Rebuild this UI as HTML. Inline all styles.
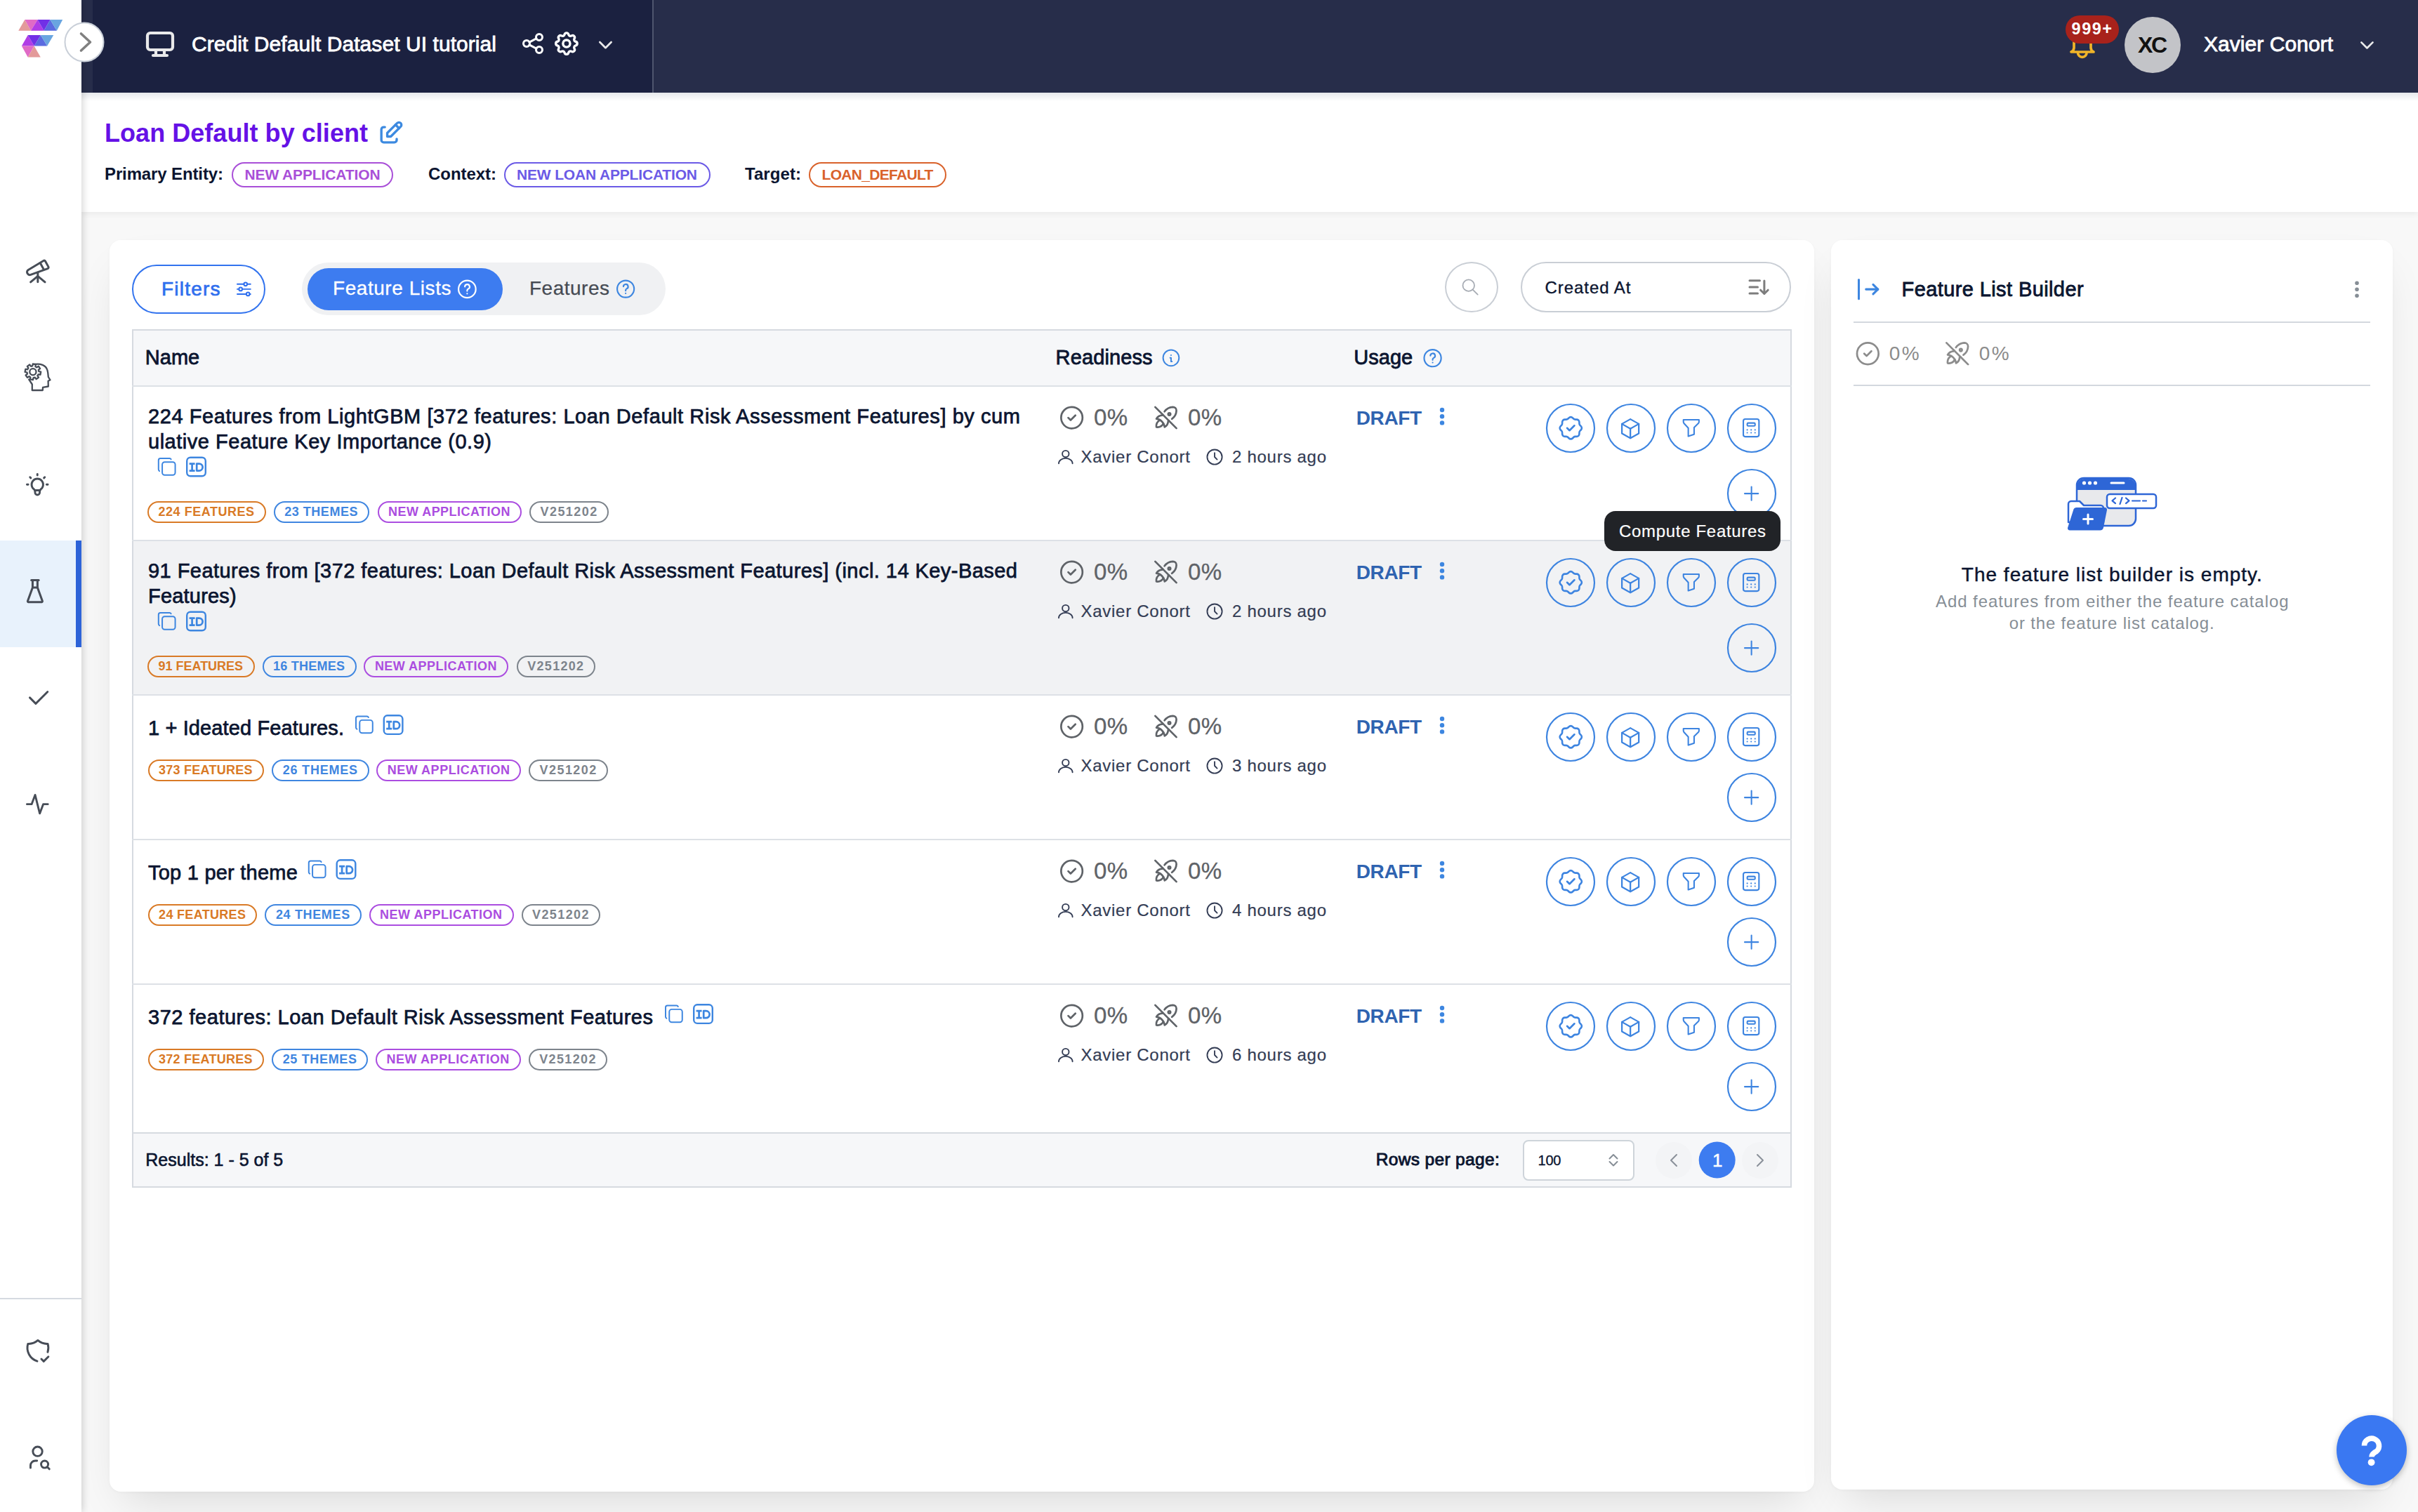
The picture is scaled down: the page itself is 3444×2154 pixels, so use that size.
<!DOCTYPE html>
<html><head><meta charset="utf-8"><title>Feature Lists</title>
<style>
html,body{margin:0;padding:0;}
body{width:3444px;height:2154px;position:relative;overflow:hidden;background:#f8f8f8;font-family:"Liberation Sans",sans-serif;}
.t{position:absolute;white-space:nowrap;}
</style></head><body>
<div style="position:absolute;left:156px;top:342px;width:2428px;height:1783px;background:#fff;border-radius:16px;box-shadow:0 30px 60px -20px rgba(0,0,0,0.13),0 1px 4px rgba(0,0,0,0.03);"></div>
<div style="position:absolute;left:2608px;top:342px;width:800px;height:1780px;background:#fff;border-radius:16px;box-shadow:0 30px 60px -20px rgba(0,0,0,0.13),0 1px 4px rgba(0,0,0,0.03);"></div>
<div style="position:absolute;left:116px;top:132px;width:3328px;height:170px;background:#fff;box-shadow:0 3px 8px rgba(0,0,0,0.06);"></div>
<div style="position:absolute;left:116px;top:132px;width:3328px;height:12px;background:linear-gradient(#e6e8ec,rgba(255,255,255,0));"></div>
<div style="position:absolute;left:116px;top:0px;width:3328px;height:132px;background:#272d4a;"></div>
<div style="position:absolute;left:132px;top:0px;width:797px;height:132px;background:#1b2140;"></div>
<div style="position:absolute;left:929px;top:0px;width:2px;height:132px;background:#4f566e;"></div>
<div style="position:absolute;left:0px;top:0px;width:116px;height:2154px;background:#fff;box-shadow:2px 0 10px rgba(0,0,0,0.17);z-index:2;"></div>
<div style="position:absolute;left:0px;top:770px;width:108px;height:152px;background:#e8f2fc;z-index:2;"></div>
<div style="position:absolute;left:108px;top:770px;width:8px;height:152px;background:#2d63d8;z-index:2;"></div>
<div style="position:absolute;left:0px;top:1849px;width:116px;height:2px;background:#d5dae1;z-index:2;"></div>
<div class="t" style="left:273.00px;top:47.81px;font-size:30px;line-height:30px;font-weight:400;color:#fff;letter-spacing:0.065px;-webkit-text-stroke:0.8px #fff;">Credit Default Dataset UI tutorial</div>
<div style="position:absolute;left:2942px;top:22px;width:76px;height:40px;background:#a8221b;border-radius:20px;z-index:6;"></div>
<div class="t" style="left:2950.60px;top:30.11px;font-size:23.5px;line-height:23.5px;font-weight:700;color:#fff;letter-spacing:1.487px;z-index:7;">999+</div>
<div style="position:absolute;left:3026px;top:24px;width:80px;height:80px;background:#c3c4c8;border-radius:50%;"></div>
<div class="t" style="left:3045.00px;top:47.81px;font-size:32px;line-height:32px;font-weight:700;color:#111;letter-spacing:-2.453px;">XC</div>
<div class="t" style="left:3139.00px;top:47.61px;font-size:30px;line-height:30px;font-weight:400;color:#fff;letter-spacing:0.048px;-webkit-text-stroke:0.8px #fff;">Xavier Conort</div>
<div class="t" style="left:149.00px;top:171.53px;font-size:36px;line-height:36px;font-weight:700;color:#6511e6;letter-spacing:0.045px;">Loan Default by client</div>
<div class="t" style="left:149.00px;top:236.28px;font-size:24px;line-height:24px;font-weight:700;color:#0b1530;letter-spacing:-0.123px;">Primary Entity:</div>
<div style="position:absolute;left:330px;top:231px;width:230px;height:35.5px;border:2px solid #a94fd8;border-radius:18px;box-sizing:border-box;"></div>
<div class="t" style="left:348.50px;top:238.02px;font-size:21px;line-height:21px;font-weight:700;color:#a94fd8;letter-spacing:-0.123px;">NEW APPLICATION</div>
<div class="t" style="left:610.00px;top:236.28px;font-size:24px;line-height:24px;font-weight:700;color:#0b1530;letter-spacing:-0.047px;">Context:</div>
<div style="position:absolute;left:718px;top:231px;width:294px;height:35.5px;border:2px solid #6b5ae6;border-radius:18px;box-sizing:border-box;"></div>
<div class="t" style="left:736.00px;top:238.02px;font-size:21px;line-height:21px;font-weight:700;color:#6b5ae6;letter-spacing:-0.166px;">NEW LOAN APPLICATION</div>
<div class="t" style="left:1061.00px;top:236.28px;font-size:24px;line-height:24px;font-weight:700;color:#0b1530;letter-spacing:0.073px;">Target:</div>
<div style="position:absolute;left:1152px;top:231px;width:196px;height:35.5px;border:2px solid #d9622b;border-radius:18px;box-sizing:border-box;"></div>
<div class="t" style="left:1170.60px;top:238.02px;font-size:21px;line-height:21px;font-weight:700;color:#d9622b;letter-spacing:-0.696px;">LOAN_DEFAULT</div>
<div style="position:absolute;left:188.4px;top:377px;width:190px;height:69.5px;border:2.5px solid #3273ee;border-radius:35px;box-sizing:border-box;"></div>
<div class="t" style="left:230.00px;top:398.10px;font-size:28px;line-height:28px;font-weight:400;color:#2f6fee;letter-spacing:1.211px;-webkit-text-stroke:0.7px #2f6fee;">Filters</div>
<div style="position:absolute;left:429.7px;top:374px;width:518.3px;height:75px;background:#f0f1f3;border-radius:38px;"></div>
<div style="position:absolute;left:437.7px;top:382px;width:278px;height:60px;background:#3d7cf0;border-radius:30px;"></div>
<div class="t" style="left:474.00px;top:397.30px;font-size:28px;line-height:28px;font-weight:400;color:#fff;letter-spacing:0.553px;-webkit-text-stroke:0.3px #fff;">Feature Lists</div>
<div class="t" style="left:754.00px;top:397.30px;font-size:28px;line-height:28px;font-weight:400;color:#464b53;letter-spacing:0.500px;-webkit-text-stroke:0.25px #464b53;">Features</div>
<div style="position:absolute;left:2058px;top:373px;width:76px;height:72px;border:2px solid #c9ced5;border-radius:50%;box-sizing:border-box;background:#fff;"></div>
<div style="position:absolute;left:2166px;top:373px;width:385px;height:72px;border:2px solid #c9ced5;border-radius:36px;box-sizing:border-box;background:#fff;"></div>
<div class="t" style="left:2200.50px;top:397.68px;font-size:24px;line-height:24px;font-weight:400;color:#0b1530;letter-spacing:0.955px;-webkit-text-stroke:0.35px #0b1530;">Created At</div>
<div style="position:absolute;left:188px;top:469px;width:2364px;height:1223px;border:2px solid #d6dae0;box-sizing:border-box;"></div>
<div style="position:absolute;left:190px;top:471px;width:2360px;height:79px;background:#f6f7f9;"></div>
<div class="t" style="left:206.80px;top:495.45px;font-size:29px;line-height:29px;font-weight:400;color:#0b1530;letter-spacing:0.014px;-webkit-text-stroke:0.8px #0b1530;">Name</div>
<div class="t" style="left:1503.60px;top:495.45px;font-size:29px;line-height:29px;font-weight:400;color:#0b1530;letter-spacing:0.121px;-webkit-text-stroke:0.8px #0b1530;">Readiness</div>
<div class="t" style="left:1928.20px;top:495.45px;font-size:29px;line-height:29px;font-weight:400;color:#0b1530;letter-spacing:0.043px;-webkit-text-stroke:0.8px #0b1530;">Usage</div>
<div style="position:absolute;left:190px;top:770px;width:2360px;height:220px;background:#f1f2f4;"></div>
<div style="position:absolute;left:188px;top:549px;width:2364px;height:2px;background:#dde1e6;"></div>
<div style="position:absolute;left:188px;top:769px;width:2364px;height:2px;background:#dde1e6;"></div>
<div style="position:absolute;left:188px;top:989px;width:2364px;height:2px;background:#dde1e6;"></div>
<div style="position:absolute;left:188px;top:1195px;width:2364px;height:2px;background:#dde1e6;"></div>
<div style="position:absolute;left:188px;top:1401px;width:2364px;height:2px;background:#dde1e6;"></div>
<div style="position:absolute;left:188px;top:1613px;width:2364px;height:2px;background:#dde1e6;"></div>
<div style="position:absolute;left:190px;top:1615px;width:2360px;height:75px;background:#f6f7f9;"></div>
<div style="position:absolute;left:188px;top:1613px;width:2364px;height:2px;background:#d6dae0;"></div>
<div class="t" style="left:211.00px;top:578.75px;font-size:29px;line-height:29px;font-weight:400;color:#0b1530;letter-spacing:0.572px;-webkit-text-stroke:0.75px #0b1530;">224 Features from LightGBM [372 features: Loan Default Risk Assessment Features] by cum</div>
<div class="t" style="left:211.00px;top:614.95px;font-size:29px;line-height:29px;font-weight:400;color:#0b1530;letter-spacing:0.524px;-webkit-text-stroke:0.75px #0b1530;">ulative Feature Key Importance (0.9)</div>
<div style="position:absolute;left:210px;top:714px;width:168.5px;height:30.5px;border:2px solid #d97a26;border-radius:16px;box-sizing:border-box;"></div>
<div class="t" style="left:225.50px;top:720.46px;font-size:18px;line-height:18px;font-weight:700;color:#d97a26;letter-spacing:0.527px;">224 FEATURES</div>
<div style="position:absolute;left:389.7px;top:714px;width:136.3px;height:30.5px;border:2px solid #3f86e0;border-radius:16px;box-sizing:border-box;"></div>
<div class="t" style="left:405.20px;top:720.46px;font-size:18px;line-height:18px;font-weight:700;color:#3f86e0;letter-spacing:0.534px;">23 THEMES</div>
<div style="position:absolute;left:537.5px;top:714px;width:205.5px;height:30.5px;border:2px solid #ab4de0;border-radius:16px;box-sizing:border-box;"></div>
<div class="t" style="left:553.00px;top:720.46px;font-size:18px;line-height:18px;font-weight:700;color:#ab4de0;letter-spacing:0.464px;">NEW APPLICATION</div>
<div style="position:absolute;left:754px;top:714px;width:112.70000000000005px;height:30.5px;border:2px solid #7d848c;border-radius:16px;box-sizing:border-box;"></div>
<div class="t" style="left:769.50px;top:720.46px;font-size:18px;line-height:18px;font-weight:700;color:#7d848c;letter-spacing:1.437px;">V251202</div>
<div class="t" style="left:1558.00px;top:578.07px;font-size:33px;line-height:33px;font-weight:400;color:#5f6368;letter-spacing:0.297px;-webkit-text-stroke:0.3px #5f6368;">0%</div>
<div class="t" style="left:1692.00px;top:578.07px;font-size:33px;line-height:33px;font-weight:400;color:#5f6368;letter-spacing:0.297px;-webkit-text-stroke:0.3px #5f6368;">0%</div>
<div class="t" style="left:1539.50px;top:638.68px;font-size:24px;line-height:24px;font-weight:400;color:#343d55;letter-spacing:0.730px;-webkit-text-stroke:0.2px #343d55;">Xavier Conort</div>
<div class="t" style="left:1755.00px;top:638.68px;font-size:24px;line-height:24px;font-weight:400;color:#343d55;letter-spacing:0.723px;-webkit-text-stroke:0.2px #343d55;">2 hours ago</div>
<div class="t" style="left:1931.80px;top:582.30px;font-size:28px;line-height:28px;font-weight:700;color:#2f63b0;letter-spacing:-0.419px;">DRAFT</div>
<div class="t" style="left:211.00px;top:798.75px;font-size:29px;line-height:29px;font-weight:400;color:#0b1530;letter-spacing:0.453px;-webkit-text-stroke:0.75px #0b1530;">91 Features from [372 features: Loan Default Risk Assessment Features] (incl. 14 Key-Based</div>
<div class="t" style="left:211.00px;top:834.95px;font-size:29px;line-height:29px;font-weight:400;color:#0b1530;letter-spacing:0.199px;-webkit-text-stroke:0.75px #0b1530;">Features)</div>
<div style="position:absolute;left:210px;top:934px;width:152.60000000000002px;height:30.5px;border:2px solid #d97a26;border-radius:16px;box-sizing:border-box;"></div>
<div class="t" style="left:225.50px;top:940.46px;font-size:18px;line-height:18px;font-weight:700;color:#d97a26;letter-spacing:-0.010px;">91 FEATURES</div>
<div style="position:absolute;left:373.5px;top:934px;width:134.0px;height:30.5px;border:2px solid #3f86e0;border-radius:16px;box-sizing:border-box;"></div>
<div class="t" style="left:389.00px;top:940.46px;font-size:18px;line-height:18px;font-weight:700;color:#3f86e0;letter-spacing:0.246px;">16 THEMES</div>
<div style="position:absolute;left:518.4px;top:934px;width:205.60000000000002px;height:30.5px;border:2px solid #ab4de0;border-radius:16px;box-sizing:border-box;"></div>
<div class="t" style="left:533.90px;top:940.46px;font-size:18px;line-height:18px;font-weight:700;color:#ab4de0;letter-spacing:0.471px;">NEW APPLICATION</div>
<div style="position:absolute;left:735.7px;top:934px;width:111.89999999999998px;height:30.5px;border:2px solid #7d848c;border-radius:16px;box-sizing:border-box;"></div>
<div class="t" style="left:751.20px;top:940.46px;font-size:18px;line-height:18px;font-weight:700;color:#7d848c;letter-spacing:1.304px;">V251202</div>
<div class="t" style="left:1558.00px;top:798.07px;font-size:33px;line-height:33px;font-weight:400;color:#5f6368;letter-spacing:0.297px;-webkit-text-stroke:0.3px #5f6368;">0%</div>
<div class="t" style="left:1692.00px;top:798.07px;font-size:33px;line-height:33px;font-weight:400;color:#5f6368;letter-spacing:0.297px;-webkit-text-stroke:0.3px #5f6368;">0%</div>
<div class="t" style="left:1539.50px;top:858.68px;font-size:24px;line-height:24px;font-weight:400;color:#343d55;letter-spacing:0.730px;-webkit-text-stroke:0.2px #343d55;">Xavier Conort</div>
<div class="t" style="left:1755.00px;top:858.68px;font-size:24px;line-height:24px;font-weight:400;color:#343d55;letter-spacing:0.723px;-webkit-text-stroke:0.2px #343d55;">2 hours ago</div>
<div class="t" style="left:1931.80px;top:802.30px;font-size:28px;line-height:28px;font-weight:700;color:#2f63b0;letter-spacing:-0.419px;">DRAFT</div>
<div class="t" style="left:211.00px;top:1023.45px;font-size:29px;line-height:29px;font-weight:400;color:#0b1530;letter-spacing:0.125px;-webkit-text-stroke:0.75px #0b1530;">1 + Ideated Features.</div>
<div style="position:absolute;left:210.6px;top:1082px;width:165.29999999999998px;height:30.5px;border:2px solid #d97a26;border-radius:16px;box-sizing:border-box;"></div>
<div class="t" style="left:226.10px;top:1088.46px;font-size:18px;line-height:18px;font-weight:700;color:#d97a26;letter-spacing:0.236px;">373 FEATURES</div>
<div style="position:absolute;left:387.2px;top:1082px;width:138.40000000000003px;height:30.5px;border:2px solid #3f86e0;border-radius:16px;box-sizing:border-box;"></div>
<div class="t" style="left:402.70px;top:1088.46px;font-size:18px;line-height:18px;font-weight:700;color:#3f86e0;letter-spacing:0.796px;">26 THEMES</div>
<div style="position:absolute;left:536.2px;top:1082px;width:206.29999999999995px;height:30.5px;border:2px solid #ab4de0;border-radius:16px;box-sizing:border-box;"></div>
<div class="t" style="left:551.70px;top:1088.46px;font-size:18px;line-height:18px;font-weight:700;color:#ab4de0;letter-spacing:0.521px;">NEW APPLICATION</div>
<div style="position:absolute;left:753px;top:1082px;width:112.79999999999995px;height:30.5px;border:2px solid #7d848c;border-radius:16px;box-sizing:border-box;"></div>
<div class="t" style="left:768.50px;top:1088.46px;font-size:18px;line-height:18px;font-weight:700;color:#7d848c;letter-spacing:1.454px;">V251202</div>
<div class="t" style="left:1558.00px;top:1018.07px;font-size:33px;line-height:33px;font-weight:400;color:#5f6368;letter-spacing:0.297px;-webkit-text-stroke:0.3px #5f6368;">0%</div>
<div class="t" style="left:1692.00px;top:1018.07px;font-size:33px;line-height:33px;font-weight:400;color:#5f6368;letter-spacing:0.297px;-webkit-text-stroke:0.3px #5f6368;">0%</div>
<div class="t" style="left:1539.50px;top:1078.68px;font-size:24px;line-height:24px;font-weight:400;color:#343d55;letter-spacing:0.730px;-webkit-text-stroke:0.2px #343d55;">Xavier Conort</div>
<div class="t" style="left:1755.00px;top:1078.68px;font-size:24px;line-height:24px;font-weight:400;color:#343d55;letter-spacing:0.723px;-webkit-text-stroke:0.2px #343d55;">3 hours ago</div>
<div class="t" style="left:1931.80px;top:1022.30px;font-size:28px;line-height:28px;font-weight:700;color:#2f63b0;letter-spacing:-0.419px;">DRAFT</div>
<div class="t" style="left:211.00px;top:1229.45px;font-size:29px;line-height:29px;font-weight:400;color:#0b1530;letter-spacing:0.230px;-webkit-text-stroke:0.75px #0b1530;">Top 1 per theme</div>
<div style="position:absolute;left:210.6px;top:1288px;width:155.79999999999998px;height:30.5px;border:2px solid #d97a26;border-radius:16px;box-sizing:border-box;"></div>
<div class="t" style="left:226.10px;top:1294.46px;font-size:18px;line-height:18px;font-weight:700;color:#d97a26;letter-spacing:0.310px;">24 FEATURES</div>
<div style="position:absolute;left:377.4px;top:1288px;width:137.30000000000007px;height:30.5px;border:2px solid #3f86e0;border-radius:16px;box-sizing:border-box;"></div>
<div class="t" style="left:392.90px;top:1294.46px;font-size:18px;line-height:18px;font-weight:700;color:#3f86e0;letter-spacing:0.659px;">24 THEMES</div>
<div style="position:absolute;left:525.6px;top:1288px;width:206.0px;height:30.5px;border:2px solid #ab4de0;border-radius:16px;box-sizing:border-box;"></div>
<div class="t" style="left:541.10px;top:1294.46px;font-size:18px;line-height:18px;font-weight:700;color:#ab4de0;letter-spacing:0.500px;">NEW APPLICATION</div>
<div style="position:absolute;left:742.5px;top:1288px;width:112.5px;height:30.5px;border:2px solid #7d848c;border-radius:16px;box-sizing:border-box;"></div>
<div class="t" style="left:758.00px;top:1294.46px;font-size:18px;line-height:18px;font-weight:700;color:#7d848c;letter-spacing:1.404px;">V251202</div>
<div class="t" style="left:1558.00px;top:1224.07px;font-size:33px;line-height:33px;font-weight:400;color:#5f6368;letter-spacing:0.297px;-webkit-text-stroke:0.3px #5f6368;">0%</div>
<div class="t" style="left:1692.00px;top:1224.07px;font-size:33px;line-height:33px;font-weight:400;color:#5f6368;letter-spacing:0.297px;-webkit-text-stroke:0.3px #5f6368;">0%</div>
<div class="t" style="left:1539.50px;top:1284.68px;font-size:24px;line-height:24px;font-weight:400;color:#343d55;letter-spacing:0.730px;-webkit-text-stroke:0.2px #343d55;">Xavier Conort</div>
<div class="t" style="left:1755.00px;top:1284.68px;font-size:24px;line-height:24px;font-weight:400;color:#343d55;letter-spacing:0.723px;-webkit-text-stroke:0.2px #343d55;">4 hours ago</div>
<div class="t" style="left:1931.80px;top:1228.30px;font-size:28px;line-height:28px;font-weight:700;color:#2f63b0;letter-spacing:-0.419px;">DRAFT</div>
<div class="t" style="left:211.00px;top:1435.45px;font-size:29px;line-height:29px;font-weight:400;color:#0b1530;letter-spacing:0.517px;-webkit-text-stroke:0.75px #0b1530;">372 features: Loan Default Risk Assessment Features</div>
<div style="position:absolute;left:210.6px;top:1494px;width:165.29999999999998px;height:30.5px;border:2px solid #d97a26;border-radius:16px;box-sizing:border-box;"></div>
<div class="t" style="left:226.10px;top:1500.46px;font-size:18px;line-height:18px;font-weight:700;color:#d97a26;letter-spacing:0.236px;">372 FEATURES</div>
<div style="position:absolute;left:387.2px;top:1494px;width:137.3px;height:30.5px;border:2px solid #3f86e0;border-radius:16px;box-sizing:border-box;"></div>
<div class="t" style="left:402.70px;top:1500.46px;font-size:18px;line-height:18px;font-weight:700;color:#3f86e0;letter-spacing:0.659px;">25 THEMES</div>
<div style="position:absolute;left:535px;top:1494px;width:206.79999999999995px;height:30.5px;border:2px solid #ab4de0;border-radius:16px;box-sizing:border-box;"></div>
<div class="t" style="left:550.50px;top:1500.46px;font-size:18px;line-height:18px;font-weight:700;color:#ab4de0;letter-spacing:0.557px;">NEW APPLICATION</div>
<div style="position:absolute;left:752.7px;top:1494px;width:112.29999999999995px;height:30.5px;border:2px solid #7d848c;border-radius:16px;box-sizing:border-box;"></div>
<div class="t" style="left:768.20px;top:1500.46px;font-size:18px;line-height:18px;font-weight:700;color:#7d848c;letter-spacing:1.370px;">V251202</div>
<div class="t" style="left:1558.00px;top:1430.07px;font-size:33px;line-height:33px;font-weight:400;color:#5f6368;letter-spacing:0.297px;-webkit-text-stroke:0.3px #5f6368;">0%</div>
<div class="t" style="left:1692.00px;top:1430.07px;font-size:33px;line-height:33px;font-weight:400;color:#5f6368;letter-spacing:0.297px;-webkit-text-stroke:0.3px #5f6368;">0%</div>
<div class="t" style="left:1539.50px;top:1490.68px;font-size:24px;line-height:24px;font-weight:400;color:#343d55;letter-spacing:0.730px;-webkit-text-stroke:0.2px #343d55;">Xavier Conort</div>
<div class="t" style="left:1755.00px;top:1490.68px;font-size:24px;line-height:24px;font-weight:400;color:#343d55;letter-spacing:0.723px;-webkit-text-stroke:0.2px #343d55;">6 hours ago</div>
<div class="t" style="left:1931.80px;top:1434.30px;font-size:28px;line-height:28px;font-weight:700;color:#2f63b0;letter-spacing:-0.419px;">DRAFT</div>
<div class="t" style="left:207.30px;top:1639.84px;font-size:25px;line-height:25px;font-weight:400;color:#0b1530;letter-spacing:0.003px;-webkit-text-stroke:0.6px #0b1530;">Results: 1 - 5 of 5</div>
<div class="t" style="left:1959.80px;top:1640.26px;font-size:24.5px;line-height:24.5px;font-weight:400;color:#0b1530;letter-spacing:0.338px;-webkit-text-stroke:0.9px #0b1530;">Rows per page:</div>
<div style="position:absolute;left:2168.6px;top:1623.7px;width:159px;height:58.3px;border:2px solid #ced4da;border-radius:8px;box-sizing:border-box;background:#fff;"></div>
<div class="t" style="left:2190.50px;top:1642.77px;font-size:20px;line-height:20px;font-weight:400;color:#0b1530;letter-spacing:-0.188px;-webkit-text-stroke:0.3px #0b1530;">100</div>
<div class="t" style="left:2439.00px;top:1639.99px;font-size:26px;line-height:26px;font-weight:400;color:#fff;letter-spacing:0.000px;-webkit-text-stroke:0.5px #fff;z-index:6;">1</div>
<div style="position:absolute;left:2284.8px;top:728px;width:251.2px;height:57px;background:#212327;border-radius:16px;z-index:10;"></div>
<div class="t" style="left:2306.00px;top:744.68px;font-size:24px;line-height:24px;font-weight:400;color:#fff;letter-spacing:0.682px;-webkit-text-stroke:0.2px #fff;z-index:11;">Compute Features</div>
<div class="t" style="left:2708.60px;top:398.45px;font-size:29px;line-height:29px;font-weight:400;color:#0b1530;letter-spacing:0.396px;-webkit-text-stroke:0.8px #0b1530;">Feature List Builder</div>
<div style="position:absolute;left:2640px;top:457.6px;width:736px;height:2px;background:#d3d8de;"></div>
<div style="position:absolute;left:2640px;top:547.7px;width:736px;height:2px;background:#d3d8de;"></div>
<div class="t" style="left:2690.80px;top:490.30px;font-size:28px;line-height:28px;font-weight:400;color:#8c8c8c;letter-spacing:2.331px;">0%</div>
<div class="t" style="left:2818.70px;top:490.30px;font-size:28px;line-height:28px;font-weight:400;color:#8c8c8c;letter-spacing:2.431px;">0%</div>
<div class="t" style="left:2793.80px;top:805.30px;font-size:28px;line-height:28px;font-weight:400;color:#0b1530;letter-spacing:1.007px;-webkit-text-stroke:0.45px #0b1530;">The feature list builder is empty.</div>
<div class="t" style="left:2757.00px;top:844.68px;font-size:24px;line-height:24px;font-weight:400;color:#868e96;letter-spacing:0.920px;">Add features from either the feature catalog</div>
<div class="t" style="left:2861.80px;top:875.68px;font-size:24px;line-height:24px;font-weight:400;color:#868e96;letter-spacing:0.827px;">or the feature list catalog.</div>
<div style="position:absolute;left:3328px;top:2016px;width:100px;height:100px;background:#3a78f2;border-radius:50%;box-shadow:0 3px 8px rgba(0,0,0,0.25);z-index:10;"></div>
<svg style="position:absolute;left:0;top:0;z-index:5;pointer-events:none" width="3444" height="2154" viewBox="0 0 3444 2154">
<g><polygon points="26.25,43.8 35.3,28.1 44,43.8" fill="#e39a9a"/><polygon points="35.3,28.1 53.5,28.1 44,43.8" fill="#e06ac6"/><polygon points="44,43.8 53.5,28.1 62.6,43.8" fill="#b03de6"/><polygon points="53.5,28.1 71.5,28.1 62.6,43.8" fill="#7130e6"/><polygon points="62.6,43.8 71.5,28.1 80.9,43.8" fill="#5a6be0"/><polygon points="71.5,28.1 89.2,28.1 80.9,43.8" fill="#69a5e0"/><polygon points="30.9,65.6 39.7,50.1 48.7,65.6" fill="#b03de6"/><polygon points="39.7,50.1 58,50.1 48.7,65.6" fill="#7130e6"/><polygon points="48.7,65.6 58,50.1 67.2,65.6" fill="#5a6be0"/><polygon points="58,50.1 76.25,50.1 67.2,65.6" fill="#69a5e0"/><polygon points="30.9,65.6 48.7,65.6 39.7,81.6" fill="#e06ac6"/><polygon points="48.7,65.6 39.7,81.6 57.8,81.6" fill="#e39a9a"/></g><circle cx="120" cy="60" r="27.5" fill="#fff" stroke="#c9cfd8" stroke-width="2"/><path d="M115.5 48 L128.5 60 L115.5 72" fill="none" stroke="#808080" stroke-width="3.6" stroke-linecap="round" stroke-linejoin="round"/><g transform="translate(33.38,366.06) scale(1.7044)" fill="none" stroke="#474d57" stroke-width="1.75" stroke-linecap="round" stroke-linejoin="round" ><path d="M6 21l6 -5l6 5"/><path d="M12 13v8"/><path d="M3.294 13.678l.166 .281c.52 .88 1.624 1.265 2.605 .91l14.242 -5.165a1.023 1.023 0 0 0 .565 -1.456l-2.62 -4.705a1.087 1.087 0 0 0 -1.447 -.42l-.056 .032l-12.694 7.618c-1.02 .613 -1.357 1.897 -.76 2.905z"/><path d="M14 5l3 5.5"/></g>
<g transform="translate(33.50,670.50) scale(1.6456)" fill="none" stroke="#474d57" stroke-width="1.75" stroke-linecap="round" stroke-linejoin="round" ><path d="M3 12h1m8 -9v1m8 8h1m-15.4 -6.4l.7 .7m12.1 -.7l-.7 .7"/><path d="M9 16a5 5 0 1 1 6 0a3.5 3.5 0 0 0 -1 3a2 2 0 0 1 -4 0a3.5 3.5 0 0 0 -1 -3"/><path d="M9.7 17l4.6 0"/></g>
<g transform="translate(29.12,821.32) scale(1.7335)" fill="none" stroke="#474d57" stroke-width="1.75" stroke-linecap="round" stroke-linejoin="round" ><path d="M9 3l6 0"/><path d="M10 9l4 0"/><path d="M10 3v6l-4 11a.7 .7 0 0 0 .5 1h11a.7 .7 0 0 0 .5 -1l-4 -11v-6"/></g>
<g transform="translate(34.04,973.67) scale(1.6869)" fill="none" stroke="#474d57" stroke-width="1.75" stroke-linecap="round" stroke-linejoin="round" ><path d="M5 12l5 5l10 -10"/></g>
<g transform="translate(33.49,1125.84) scale(1.6523)" fill="none" stroke="#474d57" stroke-width="1.75" stroke-linecap="round" stroke-linejoin="round" ><path d="M3 12h4l3 -8l4 16l3 -8h4"/></g>
<g transform="translate(33.97,1904.47) scale(1.6633)" fill="none" stroke="#474d57" stroke-width="1.75" stroke-linecap="round" stroke-linejoin="round" ><path d="M11.46 20.846a12 12 0 0 1 -7.96 -14.846a12 12 0 0 0 8.5 -3a12 12 0 0 0 8.5 3a12 12 0 0 1 -.09 7.06"/><path d="M15 19l2 2l4 -4"/></g>
<g transform="translate(33.41,2055.94) scale(1.6764)" fill="none" stroke="#474d57" stroke-width="1.75" stroke-linecap="round" stroke-linejoin="round" ><path d="M8 7a4 4 0 1 0 8 0a4 4 0 0 0 -8 0"/><path d="M6 21v-2a4 4 0 0 1 4 -4h1.5"/><path d="M18 18m-3 0a3 3 0 1 0 6 0a3 3 0 1 0 -6 0"/><path d="M20.2 20.2l1.8 1.8"/></g>
<g fill="none" stroke="#474d57" stroke-width="2.3" stroke-linecap="round" stroke-linejoin="round"><path d="M49.5 519 C57 517.5 65.5 520 67.5 527.5 C68.5 531 68.5 534 68.8 537 L71.5 541.3 L68.6 542.8 L68.8 550.5 L61 551.8 L60.8 556 L45.8 556 L45.8 547.5 L41.2 540.5"/><path d="M55.10 527.98 L55.27 529.07 L58.20 529.70 L57.48 533.76 L54.51 533.35 L53.98 534.31 L53.33 535.20 L54.96 537.72 L51.59 540.08 L49.77 537.69 L48.72 538.00 L47.63 538.17 L47.00 541.10 L42.94 540.38 L43.35 537.41 L42.39 536.88 L41.50 536.23 L38.98 537.86 L36.62 534.49 L39.01 532.67 L38.70 531.62 L38.53 530.53 L35.60 529.90 L36.32 525.84 L39.29 526.25 L39.82 525.29 L40.47 524.40 L38.84 521.88 L42.21 519.52 L44.03 521.91 L45.08 521.60 L46.17 521.43 L46.80 518.50 L50.86 519.22 L50.45 522.19 L51.41 522.72 L52.30 523.37 L54.82 521.74 L57.18 525.11 L54.79 526.93z" fill="#fff"/><circle cx="46.9" cy="529.8" r="4.6"/></g><g fill="none" stroke="#e9e9ea" stroke-width="4.2" stroke-linecap="round" stroke-linejoin="round"><rect x="210" y="47" width="36" height="24" rx="4"/><path d="M222 71v7M234 71v7M218 79h20"/></g><g transform="translate(741.00,44.00) scale(1.5000)" fill="none" stroke="#fff" stroke-width="2" stroke-linecap="round" stroke-linejoin="round" ><path d="M6 12m-3 0a3 3 0 1 0 6 0a3 3 0 1 0 -6 0"/><path d="M18 6m-3 0a3 3 0 1 0 6 0a3 3 0 1 0 -6 0"/><path d="M18 18m-3 0a3 3 0 1 0 6 0a3 3 0 1 0 -6 0"/><path d="M8.7 10.7l6.6 -3.4"/><path d="M8.7 13.3l6.6 3.4"/></g>
<g transform="translate(786.62,41.79) scale(1.6916)" fill="none" stroke="#fff" stroke-width="2" stroke-linecap="round" stroke-linejoin="round" ><path d="M10.325 4.317c.426 -1.756 2.924 -1.756 3.35 0a1.724 1.724 0 0 0 2.573 1.066c1.543 -.94 3.31 .826 2.37 2.37a1.724 1.724 0 0 0 1.065 2.572c1.756 .426 1.756 2.924 0 3.35a1.724 1.724 0 0 0 -1.066 2.573c.94 1.543 -.826 3.31 -2.37 2.37a1.724 1.724 0 0 0 -2.572 1.065c-.426 1.756 -2.924 1.756 -3.35 0a1.724 1.724 0 0 0 -2.573 -1.066c-1.543 .94 -3.31 -.826 -2.37 -2.37a1.724 1.724 0 0 0 -1.065 -2.572c-1.756 -.426 -1.756 -2.924 0 -3.35a1.724 1.724 0 0 0 1.066 -2.573c-.94 -1.543 .826 -3.31 2.37 -2.37c1 .608 2.296 .07 2.572 -1.065z"/><path d="M9 12a3 3 0 1 0 6 0a3 3 0 0 0 -6 0"/></g>
<g transform="translate(846.23,47.87) scale(1.3536)" fill="none" stroke="#e9e9ea" stroke-width="2" stroke-linecap="round" stroke-linejoin="round" ><path d="M6 9l6 6l6 -6"/></g>
<g fill="none" stroke="#f0b429" stroke-width="3.7" stroke-linecap="round" stroke-linejoin="round"><path d="M2954 50v18q0 4 -4 6h32q-4 -2 -4 -6v-18"/><path d="M2959.5 75a6.3 6.3 0 0 0 12.6 0"/></g><g transform="translate(3355.26,48.22) scale(1.3473)" fill="none" stroke="#e9e9ea" stroke-width="2" stroke-linecap="round" stroke-linejoin="round" ><path d="M6 9l6 6l6 -6"/></g>
<g transform="translate(536.46,169.31) scale(1.6800)" fill="none" stroke="#3d8ae0" stroke-width="2" stroke-linecap="round" stroke-linejoin="round" ><path d="M7 7h-1a2 2 0 0 0 -2 2v9a2 2 0 0 0 2 2h9a2 2 0 0 0 2 -2v-1"/><path d="M20.385 6.585a2.1 2.1 0 0 0 -2.97 -2.97l-8.415 8.385v3h3l8.385 -8.415z"/><path d="M16 5l3 3"/></g>
<g transform="translate(333.31,397.81) scale(1.1723)" fill="none" stroke="#2f6fee" stroke-width="1.7" stroke-linecap="round" stroke-linejoin="round" ><path d="M14 6m-2 0a2 2 0 1 0 4 0a2 2 0 1 0 -4 0"/><path d="M4 6l8 0"/><path d="M16 6l4 0"/><path d="M8 12m-2 0a2 2 0 1 0 4 0a2 2 0 1 0 -4 0"/><path d="M4 12l2 0"/><path d="M10 12l10 0"/><path d="M17 18m-2 0a2 2 0 1 0 4 0a2 2 0 1 0 -4 0"/><path d="M4 18l11 0"/><path d="M19 18l1 0"/></g>
<g transform="translate(649.00,395.50) scale(1.3648)" fill="none" stroke="#fff" stroke-width="1.6" stroke-linecap="round" stroke-linejoin="round" ><path d="M12 12m-9 0a9 9 0 1 0 18 0a9 9 0 1 0 -18 0"/><path d="M12 16.7v.01"/><path d="M9.6 9.4a2.5 2.5 0 1 1 3.5 2.4c-.7 .35 -1.1 .9 -1.1 1.7v.5"/></g>
<g transform="translate(875.05,395.55) scale(1.3393)" fill="none" stroke="#3d86e0" stroke-width="1.6" stroke-linecap="round" stroke-linejoin="round" ><path d="M12 12m-9 0a9 9 0 1 0 18 0a9 9 0 1 0 -18 0"/><path d="M12 16.7v.01"/><path d="M9.6 9.4a2.5 2.5 0 1 1 3.5 2.4c-.7 .35 -1.1 .9 -1.1 1.7v.5"/></g>
<g transform="translate(2079.95,394.85) scale(1.1795)" fill="none" stroke="#a6abb3" stroke-width="1.5" stroke-linecap="round" stroke-linejoin="round" ><path d="M10 10m-7 0a7 7 0 1 0 14 0a7 7 0 1 0 -14 0"/><path d="M21 21l-6 -6"/></g>
<g fill="none" stroke="#7d7d7d" stroke-width="3" stroke-linecap="round" stroke-linejoin="round"><path d="M2492 399.8h14.5M2492 409h11.5M2492 418h11.5M2512.9 400v18.5M2507.6 413.2l5.3 5.3l5.3 -5.3"/></g><g transform="translate(1652.83,494.73) scale(1.2602)" fill="none" stroke="#3d86e0" stroke-width="1.6" stroke-linecap="round" stroke-linejoin="round" ><path d="M3 12a9 9 0 1 0 18 0a9 9 0 0 0 -18 0"/><path d="M12 9h.01"/><path d="M11 12h1v4h1"/></g>
<g transform="translate(2024.45,494.05) scale(1.3418)" fill="none" stroke="#3d86e0" stroke-width="1.6" stroke-linecap="round" stroke-linejoin="round" ><path d="M12 12m-9 0a9 9 0 1 0 18 0a9 9 0 1 0 -18 0"/><path d="M12 16.7v.01"/><path d="M9.6 9.4a2.5 2.5 0 1 1 3.5 2.4c-.7 .35 -1.1 .9 -1.1 1.7v.5"/></g>
<g transform="translate(221.83,649.03) scale(1.3205)" fill="none" stroke="#3d86e0" stroke-width="1.5" stroke-linecap="round" stroke-linejoin="round" ><path d="M7 7m0 2.667a2.667 2.667 0 0 1 2.667 -2.667h8.666a2.667 2.667 0 0 1 2.667 2.667v8.666a2.667 2.667 0 0 1 -2.667 2.667h-8.666a2.667 2.667 0 0 1 -2.667 -2.667z"/><path d="M4.012 16.737a2.005 2.005 0 0 1 -1.012 -1.737v-10c0 -1.1 .9 -2 2 -2h10c.75 0 1.158 .385 1.5 1"/></g>
<rect x="266.2" y="651.7" width="26.6" height="26.6" rx="5" fill="none" stroke="#3d86e0" stroke-width="2.4"/><g fill="none" stroke="#3d86e0" stroke-width="2.7" stroke-linecap="butt" stroke-linejoin="round"><path d="M269.6 660.6h8M269.6 670.6h8M273.6 660.6v10"/><path d="M280.2 660.6h3.4a5 5 0 0 1 5 5v0a5 5 0 0 1 -5 5h-3.4z"/></g><g transform="translate(1506.27,574.77) scale(1.6939)" fill="none" stroke="#5f6368" stroke-width="1.6" stroke-linecap="round" stroke-linejoin="round" ><path d="M12 12m-9 0a9 9 0 1 0 18 0a9 9 0 1 0 -18 0"/><path d="M9 12l2 2l4 -4"/></g>
<g transform="translate(1640.30,574.80) scale(1.6811)" fill="none" stroke="#5f6368" stroke-width="1.6" stroke-linecap="round" stroke-linejoin="round" ><path d="M9.29 9.275a9.03 9.03 0 0 0 -.29 .725a6 6 0 0 0 -5 3a8 8 0 0 1 7 7a6 6 0 0 0 3 -5c.241 -.085 .478 -.18 .708 -.283m2.428 -1.61a9 9 0 0 0 3.864 -7.107a3 3 0 0 0 -3 -3a9 9 0 0 0 -7.103 3.86"/><path d="M7 14a6 6 0 0 0 -3 6a6 6 0 0 0 6 -3"/><path d="M15 9m-1 0a1 1 0 1 0 2 0a1 1 0 1 0 -2 0"/><path d="M3 3l18 18"/></g>
<g fill="none" stroke="#343d55" stroke-width="1.9" stroke-linecap="round" stroke-linejoin="round"><circle cx="1517.8" cy="646.6" r="4.7"/><path d="M1508 660.3 a9.8 7.4 0 0 1 19.6 0"/></g><g transform="translate(1715.91,636.91) scale(1.1760)" fill="none" stroke="#343d55" stroke-width="1.6" stroke-linecap="round" stroke-linejoin="round" ><path d="M3 12a9 9 0 1 0 18 0a9 9 0 0 0 -18 0"/><path d="M12 7v5l3 3"/></g>
<circle cx="2054" cy="584" r="3.2" fill="#3d86e0"/><circle cx="2054" cy="593.2" r="3.2" fill="#3d86e0"/><circle cx="2054" cy="602.4" r="3.2" fill="#3d86e0"/><circle cx="2237" cy="610" r="34" fill="none" stroke="#3d84e0" stroke-width="2.2"/><circle cx="2323" cy="610" r="34" fill="none" stroke="#3d84e0" stroke-width="2.2"/><circle cx="2409" cy="610" r="34" fill="none" stroke="#3d84e0" stroke-width="2.2"/><circle cx="2495" cy="610" r="34" fill="none" stroke="#3d84e0" stroke-width="2.2"/><g transform="translate(2216.45,588.95) scale(1.7337)" fill="none" stroke="#3d84e0" stroke-width="1.5" stroke-linecap="round" stroke-linejoin="round" ><path d="M5 7.2a2.2 2.2 0 0 1 2.2 -2.2h1a2.2 2.2 0 0 0 1.55 -.64l.7 -.7a2.2 2.2 0 0 1 3.12 0l.7 .7c.412 .41 .97 .64 1.55 .64h1a2.2 2.2 0 0 1 2.2 2.2v1c0 .58 .23 1.138 .64 1.55l.7 .7a2.2 2.2 0 0 1 0 3.12l-.7 .7a2.2 2.2 0 0 0 -.64 1.55v1a2.2 2.2 0 0 1 -2.2 2.2h-1a2.2 2.2 0 0 0 -1.55 .64l-.7 .7a2.2 2.2 0 0 1 -3.12 0l-.7 -.7a2.2 2.2 0 0 0 -1.55 -.64h-1a2.2 2.2 0 0 1 -2.2 -2.2v-1a2.2 2.2 0 0 0 -.64 -1.55l-.7 -.7a2.2 2.2 0 0 1 0 -3.12l.7 -.7a2.2 2.2 0 0 0 .64 -1.55v-1"/><path d="M9 12l2 2l4 -4"/></g>
<g transform="translate(2304.12,592.62) scale(1.5022)" fill="none" stroke="#3d84e0" stroke-width="1.5" stroke-linecap="round" stroke-linejoin="round" ><path d="M12 3l8 4.5l0 9l-8 4.5l-8 -4.5l0 -9l8 -4.5"/><path d="M12 12l8 -4.5"/><path d="M12 12l0 9"/><path d="M12 12l-8 -4.5"/></g>
<g transform="translate(2392.20,592.50) scale(1.3835)" fill="none" stroke="#3d84e0" stroke-width="1.5" stroke-linecap="round" stroke-linejoin="round" ><path d="M4 4h16v2.172a2 2 0 0 1 -.586 1.414l-4.414 4.414v7l-6 2v-8.5l-4.48 -4.928a2 2 0 0 1 -.52 -1.345v-2.227z"/></g>
<g transform="translate(2477.47,592.86) scale(1.3938)" fill="none" stroke="#3d84e0" stroke-width="1.5" stroke-linecap="round" stroke-linejoin="round" ><path d="M4 3m0 2a2 2 0 0 1 2 -2h12a2 2 0 0 1 2 2v14a2 2 0 0 1 -2 2h-12a2 2 0 0 1 -2 -2z"/><path d="M8 7m0 1a1 1 0 0 1 1 -1h6a1 1 0 0 1 1 1v1a1 1 0 0 1 -1 1h-6a1 1 0 0 1 -1 -1z"/><path d="M8 14l0 .01"/><path d="M12 14l0 .01"/><path d="M16 14l0 .01"/><path d="M8 17l0 .01"/><path d="M12 17l0 .01"/><path d="M16 17l0 .01"/></g>
<circle cx="2495" cy="703" r="34" fill="none" stroke="#3d84e0" stroke-width="2.2"/><g transform="translate(2478.16,686.66) scale(1.3742)" fill="none" stroke="#3d84e0" stroke-width="1.5" stroke-linecap="round" stroke-linejoin="round" ><path d="M12 5l0 14"/><path d="M5 12l14 0"/></g>
<g transform="translate(221.83,869.03) scale(1.3205)" fill="none" stroke="#3d86e0" stroke-width="1.5" stroke-linecap="round" stroke-linejoin="round" ><path d="M7 7m0 2.667a2.667 2.667 0 0 1 2.667 -2.667h8.666a2.667 2.667 0 0 1 2.667 2.667v8.666a2.667 2.667 0 0 1 -2.667 2.667h-8.666a2.667 2.667 0 0 1 -2.667 -2.667z"/><path d="M4.012 16.737a2.005 2.005 0 0 1 -1.012 -1.737v-10c0 -1.1 .9 -2 2 -2h10c.75 0 1.158 .385 1.5 1"/></g>
<rect x="266.2" y="871.7" width="26.6" height="26.6" rx="5" fill="none" stroke="#3d86e0" stroke-width="2.4"/><g fill="none" stroke="#3d86e0" stroke-width="2.7" stroke-linecap="butt" stroke-linejoin="round"><path d="M269.6 880.6h8M269.6 890.6h8M273.6 880.6v10"/><path d="M280.2 880.6h3.4a5 5 0 0 1 5 5v0a5 5 0 0 1 -5 5h-3.4z"/></g><g transform="translate(1506.27,794.77) scale(1.6939)" fill="none" stroke="#5f6368" stroke-width="1.6" stroke-linecap="round" stroke-linejoin="round" ><path d="M12 12m-9 0a9 9 0 1 0 18 0a9 9 0 1 0 -18 0"/><path d="M9 12l2 2l4 -4"/></g>
<g transform="translate(1640.30,794.80) scale(1.6811)" fill="none" stroke="#5f6368" stroke-width="1.6" stroke-linecap="round" stroke-linejoin="round" ><path d="M9.29 9.275a9.03 9.03 0 0 0 -.29 .725a6 6 0 0 0 -5 3a8 8 0 0 1 7 7a6 6 0 0 0 3 -5c.241 -.085 .478 -.18 .708 -.283m2.428 -1.61a9 9 0 0 0 3.864 -7.107a3 3 0 0 0 -3 -3a9 9 0 0 0 -7.103 3.86"/><path d="M7 14a6 6 0 0 0 -3 6a6 6 0 0 0 6 -3"/><path d="M15 9m-1 0a1 1 0 1 0 2 0a1 1 0 1 0 -2 0"/><path d="M3 3l18 18"/></g>
<g fill="none" stroke="#343d55" stroke-width="1.9" stroke-linecap="round" stroke-linejoin="round"><circle cx="1517.8" cy="866.6" r="4.7"/><path d="M1508 880.3 a9.8 7.4 0 0 1 19.6 0"/></g><g transform="translate(1715.91,856.91) scale(1.1760)" fill="none" stroke="#343d55" stroke-width="1.6" stroke-linecap="round" stroke-linejoin="round" ><path d="M3 12a9 9 0 1 0 18 0a9 9 0 0 0 -18 0"/><path d="M12 7v5l3 3"/></g>
<circle cx="2054" cy="804" r="3.2" fill="#3d86e0"/><circle cx="2054" cy="813.2" r="3.2" fill="#3d86e0"/><circle cx="2054" cy="822.4" r="3.2" fill="#3d86e0"/><circle cx="2237" cy="830" r="34" fill="none" stroke="#3d84e0" stroke-width="2.2"/><circle cx="2323" cy="830" r="34" fill="none" stroke="#3d84e0" stroke-width="2.2"/><circle cx="2409" cy="830" r="34" fill="none" stroke="#3d84e0" stroke-width="2.2"/><circle cx="2495" cy="830" r="34" fill="none" stroke="#3d84e0" stroke-width="2.2"/><g transform="translate(2216.45,808.95) scale(1.7337)" fill="none" stroke="#3d84e0" stroke-width="1.5" stroke-linecap="round" stroke-linejoin="round" ><path d="M5 7.2a2.2 2.2 0 0 1 2.2 -2.2h1a2.2 2.2 0 0 0 1.55 -.64l.7 -.7a2.2 2.2 0 0 1 3.12 0l.7 .7c.412 .41 .97 .64 1.55 .64h1a2.2 2.2 0 0 1 2.2 2.2v1c0 .58 .23 1.138 .64 1.55l.7 .7a2.2 2.2 0 0 1 0 3.12l-.7 .7a2.2 2.2 0 0 0 -.64 1.55v1a2.2 2.2 0 0 1 -2.2 2.2h-1a2.2 2.2 0 0 0 -1.55 .64l-.7 .7a2.2 2.2 0 0 1 -3.12 0l-.7 -.7a2.2 2.2 0 0 0 -1.55 -.64h-1a2.2 2.2 0 0 1 -2.2 -2.2v-1a2.2 2.2 0 0 0 -.64 -1.55l-.7 -.7a2.2 2.2 0 0 1 0 -3.12l.7 -.7a2.2 2.2 0 0 0 .64 -1.55v-1"/><path d="M9 12l2 2l4 -4"/></g>
<g transform="translate(2304.12,812.62) scale(1.5022)" fill="none" stroke="#3d84e0" stroke-width="1.5" stroke-linecap="round" stroke-linejoin="round" ><path d="M12 3l8 4.5l0 9l-8 4.5l-8 -4.5l0 -9l8 -4.5"/><path d="M12 12l8 -4.5"/><path d="M12 12l0 9"/><path d="M12 12l-8 -4.5"/></g>
<g transform="translate(2392.20,812.50) scale(1.3835)" fill="none" stroke="#3d84e0" stroke-width="1.5" stroke-linecap="round" stroke-linejoin="round" ><path d="M4 4h16v2.172a2 2 0 0 1 -.586 1.414l-4.414 4.414v7l-6 2v-8.5l-4.48 -4.928a2 2 0 0 1 -.52 -1.345v-2.227z"/></g>
<g transform="translate(2477.47,812.86) scale(1.3938)" fill="none" stroke="#3d84e0" stroke-width="1.5" stroke-linecap="round" stroke-linejoin="round" ><path d="M4 3m0 2a2 2 0 0 1 2 -2h12a2 2 0 0 1 2 2v14a2 2 0 0 1 -2 2h-12a2 2 0 0 1 -2 -2z"/><path d="M8 7m0 1a1 1 0 0 1 1 -1h6a1 1 0 0 1 1 1v1a1 1 0 0 1 -1 1h-6a1 1 0 0 1 -1 -1z"/><path d="M8 14l0 .01"/><path d="M12 14l0 .01"/><path d="M16 14l0 .01"/><path d="M8 17l0 .01"/><path d="M12 17l0 .01"/><path d="M16 17l0 .01"/></g>
<circle cx="2495" cy="923" r="34" fill="none" stroke="#3d84e0" stroke-width="2.2"/><g transform="translate(2478.16,906.66) scale(1.3742)" fill="none" stroke="#3d84e0" stroke-width="1.5" stroke-linecap="round" stroke-linejoin="round" ><path d="M12 5l0 14"/><path d="M5 12l14 0"/></g>
<g transform="translate(503.03,1016.63) scale(1.3205)" fill="none" stroke="#3d86e0" stroke-width="1.5" stroke-linecap="round" stroke-linejoin="round" ><path d="M7 7m0 2.667a2.667 2.667 0 0 1 2.667 -2.667h8.666a2.667 2.667 0 0 1 2.667 2.667v8.666a2.667 2.667 0 0 1 -2.667 2.667h-8.666a2.667 2.667 0 0 1 -2.667 -2.667z"/><path d="M4.012 16.737a2.005 2.005 0 0 1 -1.012 -1.737v-10c0 -1.1 .9 -2 2 -2h10c.75 0 1.158 .385 1.5 1"/></g>
<rect x="546.8000000000001" y="1019.3000000000001" width="26.6" height="26.6" rx="5" fill="none" stroke="#3d86e0" stroke-width="2.4"/><g fill="none" stroke="#3d86e0" stroke-width="2.7" stroke-linecap="butt" stroke-linejoin="round"><path d="M550.2 1028.2h8M550.2 1038.2h8M554.2 1028.2v10"/><path d="M560.8000000000001 1028.2h3.4a5 5 0 0 1 5 5v0a5 5 0 0 1 -5 5h-3.4z"/></g><g transform="translate(1506.27,1014.77) scale(1.6939)" fill="none" stroke="#5f6368" stroke-width="1.6" stroke-linecap="round" stroke-linejoin="round" ><path d="M12 12m-9 0a9 9 0 1 0 18 0a9 9 0 1 0 -18 0"/><path d="M9 12l2 2l4 -4"/></g>
<g transform="translate(1640.30,1014.80) scale(1.6811)" fill="none" stroke="#5f6368" stroke-width="1.6" stroke-linecap="round" stroke-linejoin="round" ><path d="M9.29 9.275a9.03 9.03 0 0 0 -.29 .725a6 6 0 0 0 -5 3a8 8 0 0 1 7 7a6 6 0 0 0 3 -5c.241 -.085 .478 -.18 .708 -.283m2.428 -1.61a9 9 0 0 0 3.864 -7.107a3 3 0 0 0 -3 -3a9 9 0 0 0 -7.103 3.86"/><path d="M7 14a6 6 0 0 0 -3 6a6 6 0 0 0 6 -3"/><path d="M15 9m-1 0a1 1 0 1 0 2 0a1 1 0 1 0 -2 0"/><path d="M3 3l18 18"/></g>
<g fill="none" stroke="#343d55" stroke-width="1.9" stroke-linecap="round" stroke-linejoin="round"><circle cx="1517.8" cy="1086.6" r="4.7"/><path d="M1508 1100.3 a9.8 7.4 0 0 1 19.6 0"/></g><g transform="translate(1715.91,1076.91) scale(1.1760)" fill="none" stroke="#343d55" stroke-width="1.6" stroke-linecap="round" stroke-linejoin="round" ><path d="M3 12a9 9 0 1 0 18 0a9 9 0 0 0 -18 0"/><path d="M12 7v5l3 3"/></g>
<circle cx="2054" cy="1024" r="3.2" fill="#3d86e0"/><circle cx="2054" cy="1033.2" r="3.2" fill="#3d86e0"/><circle cx="2054" cy="1042.4" r="3.2" fill="#3d86e0"/><circle cx="2237" cy="1050" r="34" fill="none" stroke="#3d84e0" stroke-width="2.2"/><circle cx="2323" cy="1050" r="34" fill="none" stroke="#3d84e0" stroke-width="2.2"/><circle cx="2409" cy="1050" r="34" fill="none" stroke="#3d84e0" stroke-width="2.2"/><circle cx="2495" cy="1050" r="34" fill="none" stroke="#3d84e0" stroke-width="2.2"/><g transform="translate(2216.45,1028.95) scale(1.7337)" fill="none" stroke="#3d84e0" stroke-width="1.5" stroke-linecap="round" stroke-linejoin="round" ><path d="M5 7.2a2.2 2.2 0 0 1 2.2 -2.2h1a2.2 2.2 0 0 0 1.55 -.64l.7 -.7a2.2 2.2 0 0 1 3.12 0l.7 .7c.412 .41 .97 .64 1.55 .64h1a2.2 2.2 0 0 1 2.2 2.2v1c0 .58 .23 1.138 .64 1.55l.7 .7a2.2 2.2 0 0 1 0 3.12l-.7 .7a2.2 2.2 0 0 0 -.64 1.55v1a2.2 2.2 0 0 1 -2.2 2.2h-1a2.2 2.2 0 0 0 -1.55 .64l-.7 .7a2.2 2.2 0 0 1 -3.12 0l-.7 -.7a2.2 2.2 0 0 0 -1.55 -.64h-1a2.2 2.2 0 0 1 -2.2 -2.2v-1a2.2 2.2 0 0 0 -.64 -1.55l-.7 -.7a2.2 2.2 0 0 1 0 -3.12l.7 -.7a2.2 2.2 0 0 0 .64 -1.55v-1"/><path d="M9 12l2 2l4 -4"/></g>
<g transform="translate(2304.12,1032.62) scale(1.5022)" fill="none" stroke="#3d84e0" stroke-width="1.5" stroke-linecap="round" stroke-linejoin="round" ><path d="M12 3l8 4.5l0 9l-8 4.5l-8 -4.5l0 -9l8 -4.5"/><path d="M12 12l8 -4.5"/><path d="M12 12l0 9"/><path d="M12 12l-8 -4.5"/></g>
<g transform="translate(2392.20,1032.50) scale(1.3835)" fill="none" stroke="#3d84e0" stroke-width="1.5" stroke-linecap="round" stroke-linejoin="round" ><path d="M4 4h16v2.172a2 2 0 0 1 -.586 1.414l-4.414 4.414v7l-6 2v-8.5l-4.48 -4.928a2 2 0 0 1 -.52 -1.345v-2.227z"/></g>
<g transform="translate(2477.47,1032.86) scale(1.3938)" fill="none" stroke="#3d84e0" stroke-width="1.5" stroke-linecap="round" stroke-linejoin="round" ><path d="M4 3m0 2a2 2 0 0 1 2 -2h12a2 2 0 0 1 2 2v14a2 2 0 0 1 -2 2h-12a2 2 0 0 1 -2 -2z"/><path d="M8 7m0 1a1 1 0 0 1 1 -1h6a1 1 0 0 1 1 1v1a1 1 0 0 1 -1 1h-6a1 1 0 0 1 -1 -1z"/><path d="M8 14l0 .01"/><path d="M12 14l0 .01"/><path d="M16 14l0 .01"/><path d="M8 17l0 .01"/><path d="M12 17l0 .01"/><path d="M16 17l0 .01"/></g>
<circle cx="2495" cy="1136" r="34" fill="none" stroke="#3d84e0" stroke-width="2.2"/><g transform="translate(2478.16,1119.66) scale(1.3742)" fill="none" stroke="#3d84e0" stroke-width="1.5" stroke-linecap="round" stroke-linejoin="round" ><path d="M12 5l0 14"/><path d="M5 12l14 0"/></g>
<g transform="translate(435.83,1222.63) scale(1.3205)" fill="none" stroke="#3d86e0" stroke-width="1.5" stroke-linecap="round" stroke-linejoin="round" ><path d="M7 7m0 2.667a2.667 2.667 0 0 1 2.667 -2.667h8.666a2.667 2.667 0 0 1 2.667 2.667v8.666a2.667 2.667 0 0 1 -2.667 2.667h-8.666a2.667 2.667 0 0 1 -2.667 -2.667z"/><path d="M4.012 16.737a2.005 2.005 0 0 1 -1.012 -1.737v-10c0 -1.1 .9 -2 2 -2h10c.75 0 1.158 .385 1.5 1"/></g>
<rect x="479.7" y="1225.3" width="26.6" height="26.6" rx="5" fill="none" stroke="#3d86e0" stroke-width="2.4"/><g fill="none" stroke="#3d86e0" stroke-width="2.7" stroke-linecap="butt" stroke-linejoin="round"><path d="M483.1 1234.1999999999998h8M483.1 1244.1999999999998h8M487.1 1234.1999999999998v10"/><path d="M493.7 1234.1999999999998h3.4a5 5 0 0 1 5 5v0a5 5 0 0 1 -5 5h-3.4z"/></g><g transform="translate(1506.27,1220.77) scale(1.6939)" fill="none" stroke="#5f6368" stroke-width="1.6" stroke-linecap="round" stroke-linejoin="round" ><path d="M12 12m-9 0a9 9 0 1 0 18 0a9 9 0 1 0 -18 0"/><path d="M9 12l2 2l4 -4"/></g>
<g transform="translate(1640.30,1220.80) scale(1.6811)" fill="none" stroke="#5f6368" stroke-width="1.6" stroke-linecap="round" stroke-linejoin="round" ><path d="M9.29 9.275a9.03 9.03 0 0 0 -.29 .725a6 6 0 0 0 -5 3a8 8 0 0 1 7 7a6 6 0 0 0 3 -5c.241 -.085 .478 -.18 .708 -.283m2.428 -1.61a9 9 0 0 0 3.864 -7.107a3 3 0 0 0 -3 -3a9 9 0 0 0 -7.103 3.86"/><path d="M7 14a6 6 0 0 0 -3 6a6 6 0 0 0 6 -3"/><path d="M15 9m-1 0a1 1 0 1 0 2 0a1 1 0 1 0 -2 0"/><path d="M3 3l18 18"/></g>
<g fill="none" stroke="#343d55" stroke-width="1.9" stroke-linecap="round" stroke-linejoin="round"><circle cx="1517.8" cy="1292.6" r="4.7"/><path d="M1508 1306.3 a9.8 7.4 0 0 1 19.6 0"/></g><g transform="translate(1715.91,1282.91) scale(1.1760)" fill="none" stroke="#343d55" stroke-width="1.6" stroke-linecap="round" stroke-linejoin="round" ><path d="M3 12a9 9 0 1 0 18 0a9 9 0 0 0 -18 0"/><path d="M12 7v5l3 3"/></g>
<circle cx="2054" cy="1230" r="3.2" fill="#3d86e0"/><circle cx="2054" cy="1239.2" r="3.2" fill="#3d86e0"/><circle cx="2054" cy="1248.4" r="3.2" fill="#3d86e0"/><circle cx="2237" cy="1256" r="34" fill="none" stroke="#3d84e0" stroke-width="2.2"/><circle cx="2323" cy="1256" r="34" fill="none" stroke="#3d84e0" stroke-width="2.2"/><circle cx="2409" cy="1256" r="34" fill="none" stroke="#3d84e0" stroke-width="2.2"/><circle cx="2495" cy="1256" r="34" fill="none" stroke="#3d84e0" stroke-width="2.2"/><g transform="translate(2216.45,1234.95) scale(1.7337)" fill="none" stroke="#3d84e0" stroke-width="1.5" stroke-linecap="round" stroke-linejoin="round" ><path d="M5 7.2a2.2 2.2 0 0 1 2.2 -2.2h1a2.2 2.2 0 0 0 1.55 -.64l.7 -.7a2.2 2.2 0 0 1 3.12 0l.7 .7c.412 .41 .97 .64 1.55 .64h1a2.2 2.2 0 0 1 2.2 2.2v1c0 .58 .23 1.138 .64 1.55l.7 .7a2.2 2.2 0 0 1 0 3.12l-.7 .7a2.2 2.2 0 0 0 -.64 1.55v1a2.2 2.2 0 0 1 -2.2 2.2h-1a2.2 2.2 0 0 0 -1.55 .64l-.7 .7a2.2 2.2 0 0 1 -3.12 0l-.7 -.7a2.2 2.2 0 0 0 -1.55 -.64h-1a2.2 2.2 0 0 1 -2.2 -2.2v-1a2.2 2.2 0 0 0 -.64 -1.55l-.7 -.7a2.2 2.2 0 0 1 0 -3.12l.7 -.7a2.2 2.2 0 0 0 .64 -1.55v-1"/><path d="M9 12l2 2l4 -4"/></g>
<g transform="translate(2304.12,1238.62) scale(1.5022)" fill="none" stroke="#3d84e0" stroke-width="1.5" stroke-linecap="round" stroke-linejoin="round" ><path d="M12 3l8 4.5l0 9l-8 4.5l-8 -4.5l0 -9l8 -4.5"/><path d="M12 12l8 -4.5"/><path d="M12 12l0 9"/><path d="M12 12l-8 -4.5"/></g>
<g transform="translate(2392.20,1238.50) scale(1.3835)" fill="none" stroke="#3d84e0" stroke-width="1.5" stroke-linecap="round" stroke-linejoin="round" ><path d="M4 4h16v2.172a2 2 0 0 1 -.586 1.414l-4.414 4.414v7l-6 2v-8.5l-4.48 -4.928a2 2 0 0 1 -.52 -1.345v-2.227z"/></g>
<g transform="translate(2477.47,1238.86) scale(1.3938)" fill="none" stroke="#3d84e0" stroke-width="1.5" stroke-linecap="round" stroke-linejoin="round" ><path d="M4 3m0 2a2 2 0 0 1 2 -2h12a2 2 0 0 1 2 2v14a2 2 0 0 1 -2 2h-12a2 2 0 0 1 -2 -2z"/><path d="M8 7m0 1a1 1 0 0 1 1 -1h6a1 1 0 0 1 1 1v1a1 1 0 0 1 -1 1h-6a1 1 0 0 1 -1 -1z"/><path d="M8 14l0 .01"/><path d="M12 14l0 .01"/><path d="M16 14l0 .01"/><path d="M8 17l0 .01"/><path d="M12 17l0 .01"/><path d="M16 17l0 .01"/></g>
<circle cx="2495" cy="1342" r="34" fill="none" stroke="#3d84e0" stroke-width="2.2"/><g transform="translate(2478.16,1325.66) scale(1.3742)" fill="none" stroke="#3d84e0" stroke-width="1.5" stroke-linecap="round" stroke-linejoin="round" ><path d="M12 5l0 14"/><path d="M5 12l14 0"/></g>
<g transform="translate(944.03,1428.63) scale(1.3205)" fill="none" stroke="#3d86e0" stroke-width="1.5" stroke-linecap="round" stroke-linejoin="round" ><path d="M7 7m0 2.667a2.667 2.667 0 0 1 2.667 -2.667h8.666a2.667 2.667 0 0 1 2.667 2.667v8.666a2.667 2.667 0 0 1 -2.667 2.667h-8.666a2.667 2.667 0 0 1 -2.667 -2.667z"/><path d="M4.012 16.737a2.005 2.005 0 0 1 -1.012 -1.737v-10c0 -1.1 .9 -2 2 -2h10c.75 0 1.158 .385 1.5 1"/></g>
<rect x="988.2" y="1431.3" width="26.6" height="26.6" rx="5" fill="none" stroke="#3d86e0" stroke-width="2.4"/><g fill="none" stroke="#3d86e0" stroke-width="2.7" stroke-linecap="butt" stroke-linejoin="round"><path d="M991.6 1440.1999999999998h8M991.6 1450.1999999999998h8M995.6 1440.1999999999998v10"/><path d="M1002.2 1440.1999999999998h3.4a5 5 0 0 1 5 5v0a5 5 0 0 1 -5 5h-3.4z"/></g><g transform="translate(1506.27,1426.77) scale(1.6939)" fill="none" stroke="#5f6368" stroke-width="1.6" stroke-linecap="round" stroke-linejoin="round" ><path d="M12 12m-9 0a9 9 0 1 0 18 0a9 9 0 1 0 -18 0"/><path d="M9 12l2 2l4 -4"/></g>
<g transform="translate(1640.30,1426.80) scale(1.6811)" fill="none" stroke="#5f6368" stroke-width="1.6" stroke-linecap="round" stroke-linejoin="round" ><path d="M9.29 9.275a9.03 9.03 0 0 0 -.29 .725a6 6 0 0 0 -5 3a8 8 0 0 1 7 7a6 6 0 0 0 3 -5c.241 -.085 .478 -.18 .708 -.283m2.428 -1.61a9 9 0 0 0 3.864 -7.107a3 3 0 0 0 -3 -3a9 9 0 0 0 -7.103 3.86"/><path d="M7 14a6 6 0 0 0 -3 6a6 6 0 0 0 6 -3"/><path d="M15 9m-1 0a1 1 0 1 0 2 0a1 1 0 1 0 -2 0"/><path d="M3 3l18 18"/></g>
<g fill="none" stroke="#343d55" stroke-width="1.9" stroke-linecap="round" stroke-linejoin="round"><circle cx="1517.8" cy="1498.6" r="4.7"/><path d="M1508 1512.3 a9.8 7.4 0 0 1 19.6 0"/></g><g transform="translate(1715.91,1488.91) scale(1.1760)" fill="none" stroke="#343d55" stroke-width="1.6" stroke-linecap="round" stroke-linejoin="round" ><path d="M3 12a9 9 0 1 0 18 0a9 9 0 0 0 -18 0"/><path d="M12 7v5l3 3"/></g>
<circle cx="2054" cy="1436" r="3.2" fill="#3d86e0"/><circle cx="2054" cy="1445.2" r="3.2" fill="#3d86e0"/><circle cx="2054" cy="1454.4" r="3.2" fill="#3d86e0"/><circle cx="2237" cy="1462" r="34" fill="none" stroke="#3d84e0" stroke-width="2.2"/><circle cx="2323" cy="1462" r="34" fill="none" stroke="#3d84e0" stroke-width="2.2"/><circle cx="2409" cy="1462" r="34" fill="none" stroke="#3d84e0" stroke-width="2.2"/><circle cx="2495" cy="1462" r="34" fill="none" stroke="#3d84e0" stroke-width="2.2"/><g transform="translate(2216.45,1440.95) scale(1.7337)" fill="none" stroke="#3d84e0" stroke-width="1.5" stroke-linecap="round" stroke-linejoin="round" ><path d="M5 7.2a2.2 2.2 0 0 1 2.2 -2.2h1a2.2 2.2 0 0 0 1.55 -.64l.7 -.7a2.2 2.2 0 0 1 3.12 0l.7 .7c.412 .41 .97 .64 1.55 .64h1a2.2 2.2 0 0 1 2.2 2.2v1c0 .58 .23 1.138 .64 1.55l.7 .7a2.2 2.2 0 0 1 0 3.12l-.7 .7a2.2 2.2 0 0 0 -.64 1.55v1a2.2 2.2 0 0 1 -2.2 2.2h-1a2.2 2.2 0 0 0 -1.55 .64l-.7 .7a2.2 2.2 0 0 1 -3.12 0l-.7 -.7a2.2 2.2 0 0 0 -1.55 -.64h-1a2.2 2.2 0 0 1 -2.2 -2.2v-1a2.2 2.2 0 0 0 -.64 -1.55l-.7 -.7a2.2 2.2 0 0 1 0 -3.12l.7 -.7a2.2 2.2 0 0 0 .64 -1.55v-1"/><path d="M9 12l2 2l4 -4"/></g>
<g transform="translate(2304.12,1444.62) scale(1.5022)" fill="none" stroke="#3d84e0" stroke-width="1.5" stroke-linecap="round" stroke-linejoin="round" ><path d="M12 3l8 4.5l0 9l-8 4.5l-8 -4.5l0 -9l8 -4.5"/><path d="M12 12l8 -4.5"/><path d="M12 12l0 9"/><path d="M12 12l-8 -4.5"/></g>
<g transform="translate(2392.20,1444.50) scale(1.3835)" fill="none" stroke="#3d84e0" stroke-width="1.5" stroke-linecap="round" stroke-linejoin="round" ><path d="M4 4h16v2.172a2 2 0 0 1 -.586 1.414l-4.414 4.414v7l-6 2v-8.5l-4.48 -4.928a2 2 0 0 1 -.52 -1.345v-2.227z"/></g>
<g transform="translate(2477.47,1444.86) scale(1.3938)" fill="none" stroke="#3d84e0" stroke-width="1.5" stroke-linecap="round" stroke-linejoin="round" ><path d="M4 3m0 2a2 2 0 0 1 2 -2h12a2 2 0 0 1 2 2v14a2 2 0 0 1 -2 2h-12a2 2 0 0 1 -2 -2z"/><path d="M8 7m0 1a1 1 0 0 1 1 -1h6a1 1 0 0 1 1 1v1a1 1 0 0 1 -1 1h-6a1 1 0 0 1 -1 -1z"/><path d="M8 14l0 .01"/><path d="M12 14l0 .01"/><path d="M16 14l0 .01"/><path d="M8 17l0 .01"/><path d="M12 17l0 .01"/><path d="M16 17l0 .01"/></g>
<circle cx="2495" cy="1548" r="34" fill="none" stroke="#3d84e0" stroke-width="2.2"/><g transform="translate(2478.16,1531.66) scale(1.3742)" fill="none" stroke="#3d84e0" stroke-width="1.5" stroke-linecap="round" stroke-linejoin="round" ><path d="M12 5l0 14"/><path d="M5 12l14 0"/></g>
<path d="M2292.5 1650.5l5.5 -5.5l5.5 5.5M2292.5 1655l5.5 5.5l5.5 -5.5" fill="none" stroke="#868e96" stroke-width="2" stroke-linecap="round" stroke-linejoin="round"/><circle cx="2384" cy="1653" r="26" fill="#f3f4f6"/><circle cx="2507" cy="1653" r="26" fill="#f3f4f6"/><path d="M2388 1645l-8 8l8 8M2503 1645l8 8l-8 8" fill="none" stroke="#8a9099" stroke-width="2" stroke-linecap="round" stroke-linejoin="round"/><circle cx="2445.7" cy="1652.6" r="26" fill="#3d7cf0"/><g transform="translate(2640.73,391.73) scale(1.6994)" fill="none" stroke="#3d86e0" stroke-width="1.8" stroke-linecap="round" stroke-linejoin="round" ><path d="M20 12l-10 0"/><path d="M20 12l-4 4"/><path d="M20 12l-4 -4"/><path d="M4 4l0 16"/></g>
<circle cx="3357" cy="403.2" r="2.8" fill="#868e96"/><circle cx="3357" cy="412.2" r="2.8" fill="#868e96"/><circle cx="3357" cy="421.2" r="2.8" fill="#868e96"/><g transform="translate(2639.85,483.25) scale(1.7066)" fill="none" stroke="#8c8c8c" stroke-width="1.6" stroke-linecap="round" stroke-linejoin="round" ><path d="M12 12m-9 0a9 9 0 1 0 18 0a9 9 0 1 0 -18 0"/><path d="M9 12l2 2l4 -4"/></g>
<g transform="translate(2767.24,483.24) scale(1.7092)" fill="none" stroke="#8c8c8c" stroke-width="1.6" stroke-linecap="round" stroke-linejoin="round" ><path d="M9.29 9.275a9.03 9.03 0 0 0 -.29 .725a6 6 0 0 0 -5 3a8 8 0 0 1 7 7a6 6 0 0 0 3 -5c.241 -.085 .478 -.18 .708 -.283m2.428 -1.61a9 9 0 0 0 3.864 -7.107a3 3 0 0 0 -3 -3a9 9 0 0 0 -7.103 3.86"/><path d="M7 14a6 6 0 0 0 -3 6a6 6 0 0 0 6 -3"/><path d="M15 9m-1 0a1 1 0 1 0 2 0a1 1 0 1 0 -2 0"/><path d="M3 3l18 18"/></g>
<g><rect x="2958" y="681" width="84" height="68" rx="10" fill="#e8e9ec" stroke="#2e66d6" stroke-width="2.5"/><path d="M2958 693 a11 11 0 0 1 11 -11 h62 a11 11 0 0 1 11 11 v5 h-84z" fill="#2e66d6"/><circle cx="2968.5" cy="688" r="2.6" fill="#fff"/><circle cx="2976.5" cy="688" r="2.6" fill="#fff"/><circle cx="2984.5" cy="688" r="2.6" fill="#fff"/><path d="M3007 688h18" stroke="#fff" stroke-width="3" stroke-linecap="round"/><rect x="3001" y="704" width="70" height="20" rx="4" fill="#fff" stroke="#2e66d6" stroke-width="2.5"/><path d="M3013 709.5l-4.5 3.8l4.5 3.8M3019.5 718l3 -9M3028 709.5l4.5 3.8l-4.5 3.8M3037 713.5h11M3052 713.5h5" fill="none" stroke="#2e66d6" stroke-width="2.2" stroke-linecap="round" stroke-linejoin="round"/><path d="M2946 718 a4 4 0 0 1 4 -4 h12 l6 6 h24 a4 4 0 0 1 4 4 v20 h-50z" fill="#fff" stroke="#2e66d6" stroke-width="2.5" stroke-linejoin="round"/><path d="M2953 727 a5 5 0 0 1 5 -4 h40 a3 3 0 0 1 3 3.5 l-5 25 a5 5 0 0 1 -5 4 h-43 a3 3 0 0 1 -3 -3.5z" fill="#2e66d6"/><path d="M2974 733v13M2967.5 739.5h13" stroke="#fff" stroke-width="3" stroke-linecap="round"/></g></svg>
<svg style="position:absolute;left:0;top:0;z-index:12;pointer-events:none" width="3444" height="2154"><path d="M3367.5 2059.5A10.5 10.5 0 1 1 3385 2067.5Q3378 2071 3378 2075.5" fill="none" stroke="#fff" stroke-width="7.6"/><circle cx="3377.6" cy="2083.3" r="4.9" fill="#fff"/></svg></body></html>
